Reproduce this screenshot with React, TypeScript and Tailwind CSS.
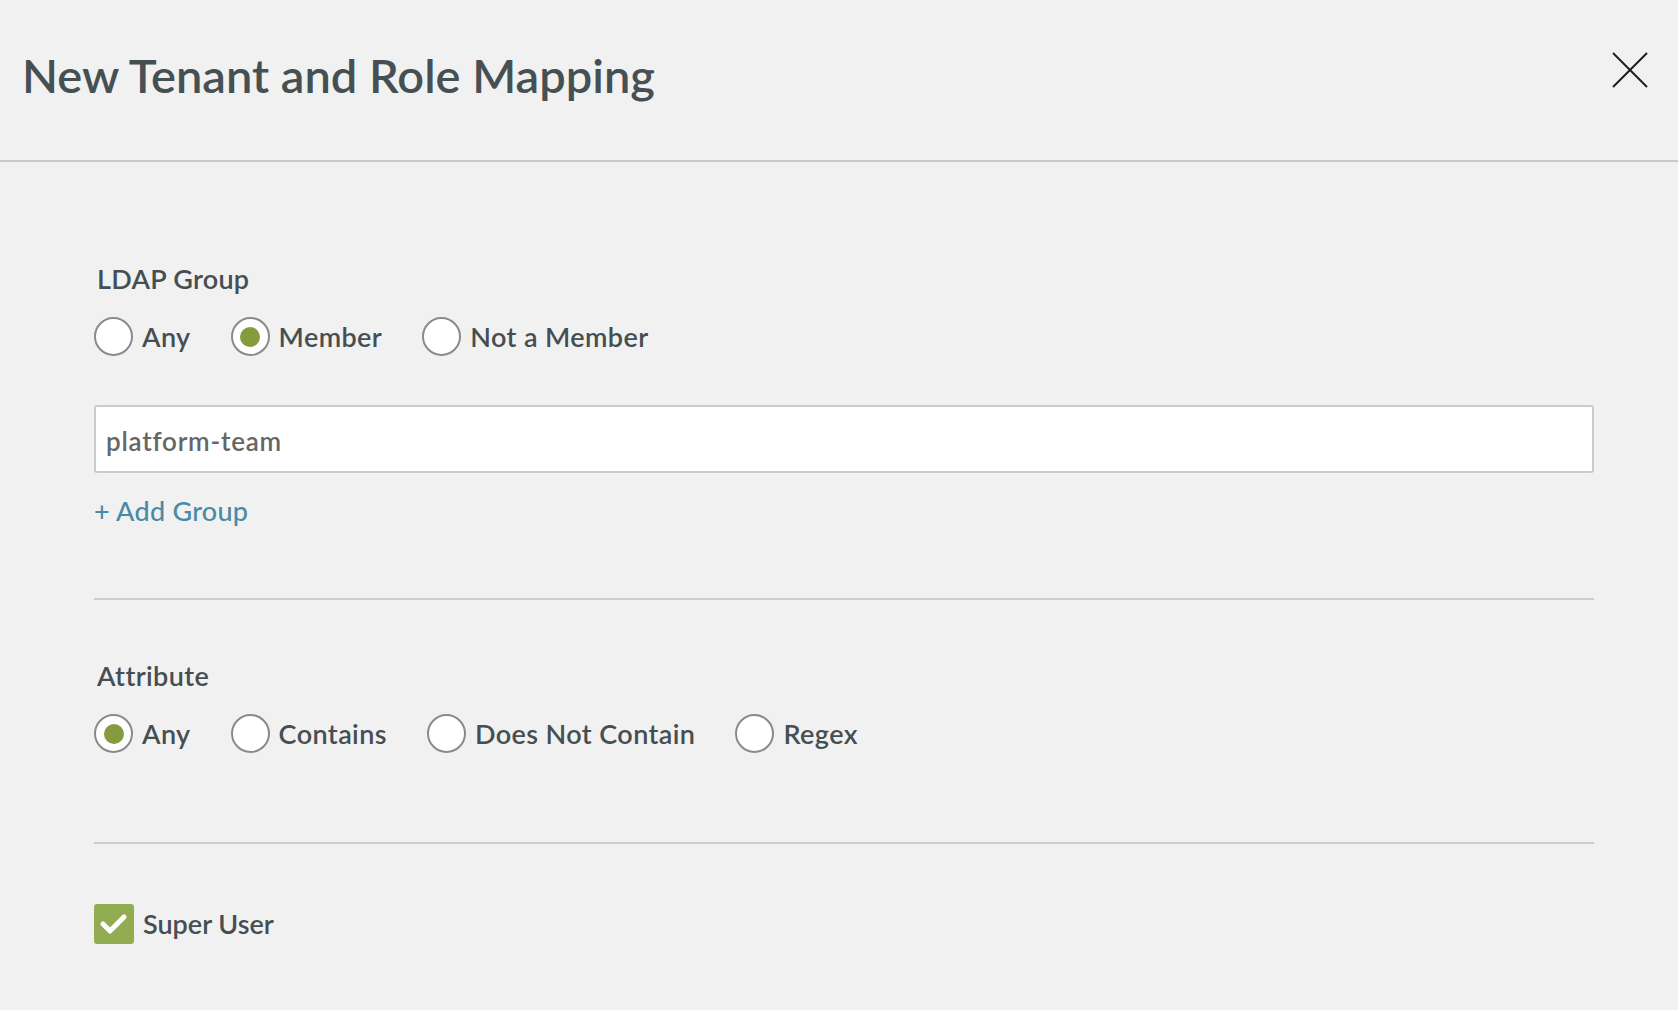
import React from "react";

const font = { fontFamily: "Lato, 'Open Sans', sans-serif" };

function Radio({ label, checked }: { label: string; checked?: boolean }) {
  return (
    <label className="flex items-center gap-[9px] mr-[40px] cursor-pointer">
      <span className="w-[39px] h-[39px] rounded-full border-2 border-[#8a8a8a] bg-white flex items-center justify-center shrink-0">
        {checked && <span className="w-[20px] h-[20px] rounded-full bg-[#869a3e]" />}
      </span>
      <span className="text-[27px] leading-[30px] font-semibold tracking-[0.015em] text-[#454e52]">{label}</span>
    </label>
  );
}

export default function App() {
  return (
    <div className="w-[1678px] h-[1010px] bg-[#f1f1f1] overflow-hidden" style={font}>
      <header className="h-[162px] border-b-2 border-[#c9c9c9] flex justify-between pl-[22px] pr-[30px] pt-[47px]">
        <h1 className="text-[47px] leading-[56px] font-semibold text-[#465053]">New Tenant and Role Mapping</h1>
        <button className="mt-[5px] w-[36px] h-[36px] self-start" aria-label="Close">
          <svg width="36" height="36" viewBox="0 0 36 36" fill="none" stroke="#1e1e1e" strokeWidth="2">
            <line x1="1" y1="1" x2="35" y2="35" />
            <line x1="35" y1="1" x2="1" y2="35" />
          </svg>
        </button>
      </header>

      <main className="pl-[94px] pr-[84px] pt-[102px] flex flex-col">
        <div className="text-[27px] leading-[30px] font-semibold tracking-[0.01em] text-[#454e52] pl-[3px]">LDAP Group</div>
        <div className="flex mt-[23px]">
          <Radio label="Any" />
          <Radio label="Member" checked />
          <Radio label="Not a Member" />
        </div>
        <input
          readOnly
          value="platform-team"
          className="mt-[49px] h-[68px] w-full bg-white border-2 border-[#cbcbcb] rounded-[3px] pl-[10px] pt-[3px] text-[26px] tracking-[0.03em] font-semibold text-[#666666] outline-none"
          style={font}
        />
        <div className="mt-[23px] text-[27px] leading-[30px] font-medium tracking-[0.01em] text-[#4b8aa6]">+ Add Group</div>

        <div className="mt-[72px] h-[2px] bg-[#cccccc]" />

        <div className="mt-[61px] text-[27px] leading-[30px] font-semibold text-[#454e52] pl-[3px] tracking-[0.015em]">Attribute</div>
        <div className="flex mt-[23px]">
          <Radio label="Any" checked />
          <Radio label="Contains" />
          <Radio label="Does Not Contain" />
          <Radio label="Regex" />
        </div>

        <div className="mt-[89px] h-[2px] bg-[#cccccc]" />

        <label className="mt-[60px] flex items-center gap-[9px]">
          <span className="w-[40px] h-[40px] rounded-[3px] bg-[#92ad51] flex items-center justify-center">
            <svg width="40" height="40" viewBox="0 0 40 40" fill="none" stroke="#ffffff" strokeWidth="5" strokeLinecap="round" strokeLinejoin="round">
              <polyline points="9,20 16,27 30,13" />
            </svg>
          </span>
          <span className="text-[27px] leading-[30px] font-semibold text-[#454e52]">Super User</span>
        </label>
      </main>
    </div>
  );
}
